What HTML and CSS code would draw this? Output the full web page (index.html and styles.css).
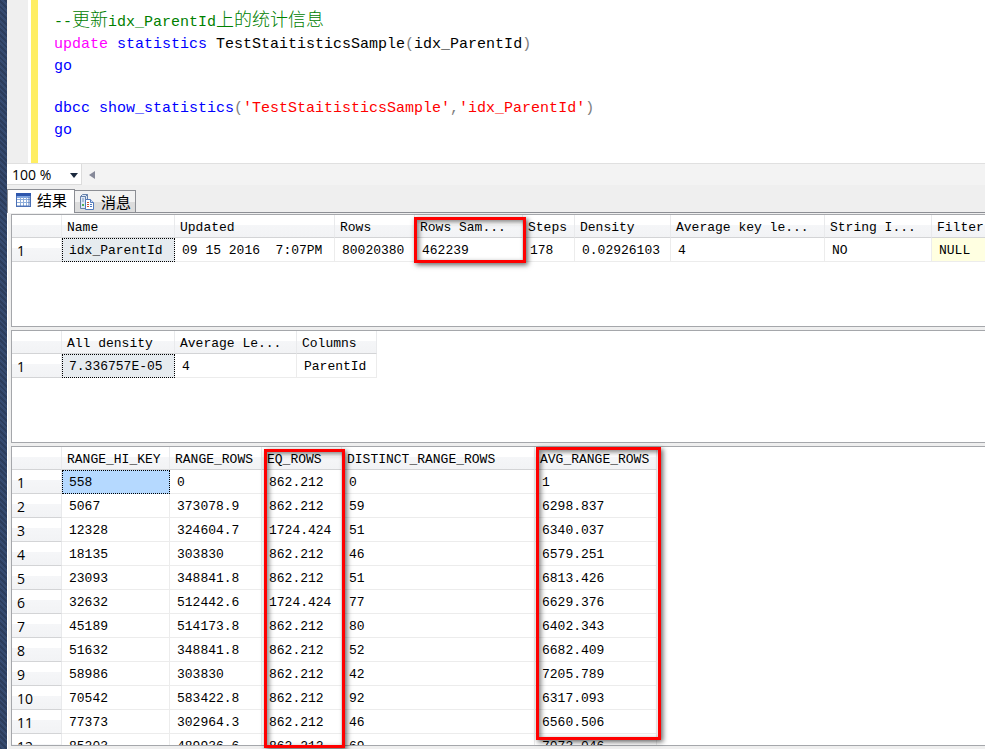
FILE: index.html
```
<!DOCTYPE html>
<html lang="zh-CN">
<head>
<meta charset="UTF-8">
<meta name="viewport" content="width=device-width, initial-scale=1.0">
<title>Query Results</title>
<link rel="stylesheet" href="styles.css">
</head>
<body>

<div class="dock"></div>
<main class="window">

    <section class="editor">
        <div class="gutter"></div>
        <div class="change-bar"></div>
        <div class="code">
            <div class="line comment">--<span class="cjk">更新</span>idx_ParentId<span class="cjk">上的统计信息</span></div>
            <div class="line"><span class="function">update</span> <span class="keyword">statistics</span> TestStaitisticsSample<span class="operator">(</span>idx_ParentId<span class="operator">)</span></div>
            <div class="line keyword">go</div>
            <div class="line blank"></div>
            <div class="line"><span class="keyword">dbcc show_statistics</span><span class="operator">(</span><span class="string">'TestStaitisticsSample'</span><span class="operator">,</span><span class="string">'idx_ParentId'</span><span class="operator">)</span></div>
            <div class="line keyword">go</div>
        </div>
    </section>

    <div class="zoom-bar">
        <div class="zoom">
            <select class="zoom-select" aria-label="Zoom">
                <option>100 %</option>
            </select>
            <svg class="zoom-arrow" width="8" height="5" viewBox="0 0 8 5"><path d="M0 0h8L4 5z" fill="#1b293e"/></svg>
        </div>
        <button class="scroll-left" aria-label="Scroll left">
            <svg width="6" height="8" viewBox="0 0 6 8"><path d="M6 0v8L0 4z" fill="#868999"/></svg>
        </button>
    </div>

    <div class="tabs">
        <button class="tab active">
            <svg width="15" height="14" viewBox="0 0 15 14">
                <rect x=".5" y=".5" width="14" height="13" fill="#fff" stroke="#4a6fb5"/>
                <path d="M0 0h15v3H0z" fill="#2e57ad"/>
                <path d="M1 3h13v2H1z" fill="#7fa5e2"/>
                <path d="M4.500 4v9M7.500 4v9M10.500 4v9M1 6.500h13M1 9.500h13" stroke="#8faedb"/>
                <path d="M13 4v9H1" fill="none" stroke="#5378bb"/>
            </svg>
            结果
        </button>
        <button class="tab">
            <svg width="16" height="16" viewBox="0 0 16 16">
                <path d="M1.500 2.500l2-2h5v12l-2 2h-5z" fill="#dfe8f5" stroke="#6681aa"/>
                <path d="M6.500 14V2.500h-5M6.500 2.500l2-2" fill="none" stroke="#6681aa"/>
                <path d="M3 5h2M3 7h2" stroke="#7792b9"/>
                <path d="M3 10h2v2H3z" fill="#55ae52"/>
                <path d="M6.500 5.500h5l3 3v7h-8z" fill="#fff" stroke="#5279ba"/>
                <path d="M11.500 5.500v3h3" fill="#d5e2f5" stroke="#5279ba"/>
                <path d="M8 8.500h2M8 10.500h2M8 12.500h2" stroke="#d7502e"/>
                <path d="M11 10.500h2M11 12.500h2" stroke="#4b76bd"/>
            </svg>
            消息
        </button>
    </div>

    <section class="results">
        <div class="pane">
            <div class="pane-view">
                <table class="grid">
                    <colgroup><col class="w-index"><col class="w-name"><col class="w-updated"><col class="w-rows"><col class="w-sampled"><col class="w-steps"><col class="w-density"><col class="w-key-length"><col class="w-string-index"><col class="w-filter"></colgroup>
                    <thead>
                        <tr><th></th><th>Name</th><th>Updated</th><th>Rows</th><th>Rows Sam...</th><th>Steps</th><th>Density</th><th>Average key le...</th><th>String I...</th><th>Filter</th></tr>
                    </thead>
                    <tbody>
                        <tr><th>1</th><td class="focused">idx_ParentId</td><td>09 15 2016&nbsp; 7:07PM</td><td>80020380</td><td>462239</td><td>178</td><td>0.02926103</td><td>4</td><td>NO</td><td class="null">NULL</td></tr>
                    </tbody>
                </table>
            </div>
            <div class="marker marker-sampled"></div>
        </div>

        <div class="pane">
            <div class="pane-view">
                <table class="grid">
                    <colgroup><col class="w-index"><col class="w-name"><col class="w-length"><col class="w-rows"></colgroup>
                    <thead>
                        <tr><th></th><th>All density</th><th>Average Le...</th><th>Columns</th></tr>
                    </thead>
                    <tbody>
                        <tr><th>1</th><td class="focused">7.336757E-05</td><td>4</td><td>ParentId</td></tr>
                    </tbody>
                </table>
            </div>
        </div>

        <div class="pane pane-fill">
            <div class="pane-view">
                <table class="grid">
                    <colgroup><col class="w-index"><col class="w-hi-key"><col class="w-range"><col class="w-rows"><col class="w-distinct"><col class="w-length"></colgroup>
                    <thead>
                        <tr><th></th><th>RANGE_HI_KEY</th><th>RANGE_ROWS</th><th>EQ_ROWS</th><th>DISTINCT_RANGE_ROWS</th><th>AVG_RANGE_ROWS</th></tr>
                    </thead>
                    <tbody>
                        <tr><th>1</th><td class="focused selected">558</td><td>0</td><td>862.212</td><td>0</td><td>1</td></tr>
                        <tr><th>2</th><td>5067</td><td>373078.9</td><td>862.212</td><td>59</td><td>6298.837</td></tr>
                        <tr><th>3</th><td>12328</td><td>324604.7</td><td>1724.424</td><td>51</td><td>6340.037</td></tr>
                        <tr><th>4</th><td>18135</td><td>303830</td><td>862.212</td><td>46</td><td>6579.251</td></tr>
                        <tr><th>5</th><td>23093</td><td>348841.8</td><td>862.212</td><td>51</td><td>6813.426</td></tr>
                        <tr><th>6</th><td>32632</td><td>512442.6</td><td>1724.424</td><td>77</td><td>6629.376</td></tr>
                        <tr><th>7</th><td>45189</td><td>514173.8</td><td>862.212</td><td>80</td><td>6402.343</td></tr>
                        <tr><th>8</th><td>51632</td><td>348841.8</td><td>862.212</td><td>52</td><td>6682.409</td></tr>
                        <tr><th>9</th><td>58986</td><td>303830</td><td>862.212</td><td>42</td><td>7205.789</td></tr>
                        <tr><th>10</th><td>70542</td><td>583422.8</td><td>862.212</td><td>92</td><td>6317.093</td></tr>
                        <tr><th>11</th><td>77373</td><td>302964.3</td><td>862.212</td><td>46</td><td>6560.506</td></tr>
                        <tr><th>12</th><td>85203</td><td>489936.6</td><td>862.212</td><td>69</td><td>7073.046</td></tr>
                    </tbody>
                </table>
            </div>
            <div class="marker marker-eq"></div>
            <div class="marker marker-avg"></div>
        </div>
    </section>

</main>

</body>
</html>
```

FILE: styles.css
```
* {
    box-sizing: border-box;
}
body {
    display: flex;
    height: 100vh;
    margin: 0;
    overflow: hidden;
    background: #efefef;
    color: #000;
    font-family: "Open Sans", "Noto Sans CJK SC", sans-serif;
    font-size: 14px;
}
.dock {
    flex: none;
    width: 7px;
    background: repeating-linear-gradient(45deg, #2c3d5c 0 2px, #364b70 2px 4px);
}
.window {
    flex: 1;
    min-width: 0;
    display: flex;
    flex-direction: column;
}

/* editor */
.editor {
    flex: none;
    display: flex;
    background: #fff;
}
.gutter {
    width: 21px;
    background: #efefef;
}
.change-bar {
    width: 7px;
    margin-left: 3px;
    background: #ffee62;
}
.code {
    padding: 12px 0 21px 16px;
    font-family: "Liberation Mono", "Noto Sans CJK SC", monospace;
    font-size: 15px;
}
.line {
    height: 22px;
    line-height: 22px;
    white-space: pre;
}
.line.blank {
    height: 20px;
}
.cjk {
    font-family: "Noto Sans CJK SC", sans-serif;
    font-size: 18px;
    font-weight: 300;
    line-height: 0;
}
.comment { color: #008000; }
.keyword { color: #0000ff; }
.function { color: #ff00ff; }
.string { color: #ff0000; }
.operator { color: #808080; }

/* zoom box and horizontal scroll */
.zoom-bar {
    flex: none;
    display: flex;
    height: 22px;
    border-top: 1px solid #e0e0e0;
    background: #f3f3f3;
}
.zoom {
    position: relative;
    width: 75px;
    border-right: 1px solid #dcdcdc;
    border-bottom: 1px solid #dcdcdc;
    background: #fff;
}
.zoom-select {
    width: 100%;
    height: 100%;
    padding: 0 0 0 5px;
    border: 0;
    appearance: none;
    background: transparent;
    color: #000;
    font: inherit;
}
.zoom-arrow {
    position: absolute;
    right: 3px;
    top: 9px;
    pointer-events: none;
}
.scroll-left {
    display: flex;
    align-items: center;
    padding: 0 7px;
    border: 0;
    background: transparent;
}

/* tabs */
.tabs {
    flex: none;
    display: flex;
    align-items: flex-end;
    height: 28px;
    border-bottom: 1px solid #8c8e94;
}
.tab {
    display: flex;
    align-items: center;
    gap: 6px;
    height: 22px;
    padding: 0 4px;
    border: 1px solid #8c8e94;
    border-bottom: 0;
    border-left: 0;
    background: linear-gradient(#f2f2f2 50%, #dcdcdc 50%);
    color: #000;
    font: inherit;
    font-size: 15px;
    line-height: 20px;
}
.tab.active {
    height: 24px;
    margin-bottom: -1px;
    padding: 0 7px 3px 8px;
    border-left: 1px solid #8c8e94;
    background: #fff;
}

/* result grids */
.results {
    flex: 1;
    min-height: 0;
    display: flex;
    flex-direction: column;
    gap: 3px;
    padding: 1px 0 3px 3px;
    border-left: 1px solid #fff;
}
.pane {
    position: relative;
    flex: none;
    height: 113px;
}
.pane-fill {
    flex: 1;
    min-height: 0;
}
.pane-view {
    height: 100%;
    overflow: hidden;
    border: 1px solid #a5a7ab;
    border-right: 0;
    background: #fff;
}
.grid {
    width: 0;
    table-layout: fixed;
    border-collapse: separate;
    border-spacing: 0;
    font-family: "Liberation Mono", "Noto Sans CJK SC", monospace;
    font-size: 13px;
    line-height: 16px;
    white-space: nowrap;
}
.grid th {
    padding: 0 0 0 5px;
    border-right: 1px solid #e9eaec;
    border-bottom: 1px solid #d3d4d6;
    background: linear-gradient(#fff 45%, #f5f6f8 45%, #f2f3f5);
    font-weight: normal;
    text-align: left;
}
.grid thead th {
    height: 23px;
    padding-top: 4px;
}
.grid tbody th {
    padding-top: 2px;
    font-family: "Open Sans", sans-serif;
    font-size: 14px;
}
.grid td {
    height: 24px;
    padding: 2px 0 0 7px;
    border-right: 1px solid #ececec;
    border-bottom: 1px solid #ececec;
}
.grid td.focused {
    padding-left: 6px;
    border: 1px dotted #000;
    background: #e6ebef;
}
.grid td.selected {
    background: #b5d9ff;
}
.grid td.null {
    background: #ffffe1;
}

.w-index { width: 50px; }
.w-name { width: 113px; }
.w-updated { width: 160px; }
.w-rows { width: 80px; }
.w-sampled { width: 108px; }
.w-steps { width: 52px; }
.w-density { width: 96px; }
.w-key-length { width: 154px; }
.w-string-index { width: 107px; }
.w-filter { width: 120px; }
.w-length { width: 122px; }
.w-hi-key { width: 108px; }
.w-range { width: 92px; }
.w-distinct { width: 193px; }

/* red highlight frames over the grids */
.marker {
    position: absolute;
    border: 3px solid #ff0000;
    box-shadow: 2px 2px 5px rgba(0, 0, 0, 0.6), inset 2px 2px 5px rgba(0, 0, 0, 0.5);
    pointer-events: none;
}
.marker-sampled {
    left: 403px;
    top: 3px;
    width: 112px;
    height: 46px;
}
.marker-eq {
    left: 253px;
    top: 3px;
    bottom: -2px;
    width: 81px;
}
.marker-avg {
    left: 525px;
    top: 1px;
    bottom: 6px;
    width: 125px;
}
```
